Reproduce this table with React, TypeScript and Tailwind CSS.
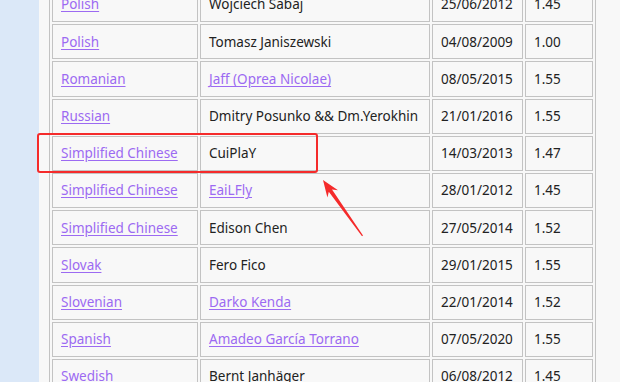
import React from "react";

type Cell = { text: string; link?: boolean };
type Row = [Cell, Cell, string, string];

const rows: Row[] = [
  [{ text: "Polish", link: true }, { text: "Wojciech Sabaj" }, "25/06/2012", "1.45"],
  [{ text: "Polish", link: true }, { text: "Tomasz Janiszewski" }, "04/08/2009", "1.00"],
  [{ text: "Romanian", link: true }, { text: "Jaff (Oprea Nicolae)", link: true }, "08/05/2015", "1.55"],
  [{ text: "Russian", link: true }, { text: "Dmitry Posunko && Dm.Yerokhin" }, "21/01/2016", "1.55"],
  [{ text: "Simplified Chinese", link: true }, { text: "CuiPlaY" }, "14/03/2013", "1.47"],
  [{ text: "Simplified Chinese", link: true }, { text: "EaiLFly", link: true }, "28/01/2012", "1.45"],
  [{ text: "Simplified Chinese", link: true }, { text: "Edison Chen" }, "27/05/2014", "1.52"],
  [{ text: "Slovak", link: true }, { text: "Fero Fico" }, "29/01/2015", "1.55"],
  [{ text: "Slovenian", link: true }, { text: "Darko Kenda", link: true }, "22/01/2014", "1.52"],
  [{ text: "Spanish", link: true }, { text: "Amadeo García Torrano", link: true }, "07/05/2020", "1.55"],
  [{ text: "Swedish", link: true }, { text: "Bernt Janhäger" }, "06/08/2012", "1.45"],
];

const td = "h-[35.2px] border border-[#c3c3c3] px-[8px] py-0 align-middle whitespace-nowrap";

function Text({ cell }: { cell: Cell }) {
  return cell.link ? (
    <a className="text-[#9c6af2] underline underline-offset-[2px]" href="#">{cell.text}</a>
  ) : (
    <span>{cell.text}</span>
  );
}

export default function App() {
  return (
    <div className="relative flex h-[382px] w-[620px] overflow-hidden bg-[#f8f8f8] text-[13.5px] text-[#222] [font-family:'Noto_Sans',sans-serif]">
      <div className="w-[39px] shrink-0 bg-[#dbe8f8]" />
      <div className="pl-[10px]">
        <table className="mt-[-16px] w-[547px] table-fixed border-separate border-spacing-[2px] border border-[#c3c3c3]">
          <colgroup>
            <col className="w-[146px]" />
            <col className="w-[230px]" />
            <col className="w-[91px]" />
            <col />
          </colgroup>
          <tbody>
            {rows.map((r, i) => (
              <tr key={i}>
                <td className={td}><Text cell={r[0]} /></td>
                <td className={td}><Text cell={r[1]} /></td>
                <td className={td}>{r[2]}</td>
                <td className={td}>{r[3]}</td>
              </tr>
            ))}
          </tbody>
        </table>
      </div>

      {/* highlight box */}
      <div className="absolute left-[37px] top-[133px] h-[40px] w-[281px] rounded-[3px] border-2 border-[#f52b2b]" />

      {/* arrow */}
      <svg className="absolute left-0 top-0" width="620" height="382" viewBox="0 0 620 382">
        <polygon
          fill="#f52b2b"
          points="323,180 338,190.2 332,189.6 363,235.6 362,236.3 328.8,191.8 327.4,197.6"
        />
      </svg>
    </div>
  );
}
